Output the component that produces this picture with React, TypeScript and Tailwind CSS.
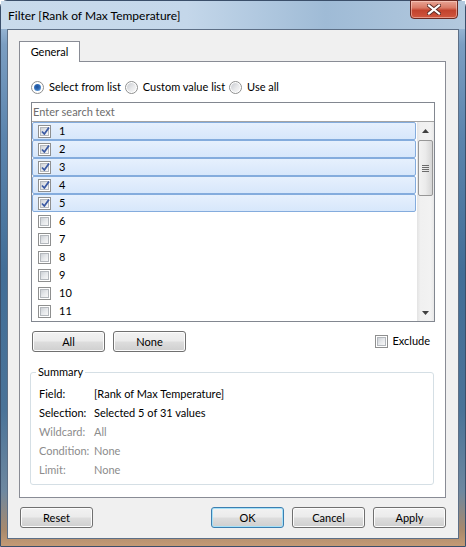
import React from "react";

const FONT = "font-['Lato','Noto_Sans',sans-serif]";

function Checkbox({ checked }: { checked: boolean }) {
  return (
    <span className="relative flex h-[13px] w-[13px] shrink-0 items-center justify-center border border-[#8e8f8f] bg-white">
      <span className="h-[9px] w-[9px] border border-[#b4b8bd] bg-[linear-gradient(135deg,#cdd1d6_0%,#e6e8eb_50%,#f7f7f7_100%)]" />
      {checked && (
        <svg className="absolute left-[1px] top-[0px]" width="11" height="11" viewBox="0 0 11 11">
          <path d="M2 5.5 L4.3 8 L9 1.5" fill="none" stroke="#3b5aa3" strokeWidth="1.8" strokeLinejoin="round" />
        </svg>
      )}
    </span>
  );
}

function Radio({ checked }: { checked: boolean }) {
  return (
    <span className="flex h-[13px] w-[13px] shrink-0 items-center justify-center rounded-full border border-[#8e8f8f] bg-white">
      {checked ? (
        <span className="h-[7px] w-[7px] rounded-full bg-[radial-gradient(circle_at_45%_40%,#1d4f97_0%,#2f6cb8_45%,#8cc0ee_100%)]" />
      ) : (
        <span className="h-[9px] w-[9px] rounded-full bg-[linear-gradient(135deg,#c9ccd1_0%,#e8e9eb_55%,#f8f8f8_100%)]" />
      )}
    </span>
  );
}

function Button({ label, focused = false }: { label: string; focused?: boolean }) {
  return (
    <div
      className={`flex h-[21px] w-[73px] items-center justify-center rounded-[3px] border ${
        focused ? "border-[#3c7fb1] shadow-[inset_0_0_0_1px_#a6e1f8]" : "border-[#707070] shadow-[inset_0_0_0_1px_#fcfcfc]"
      } bg-[linear-gradient(180deg,#f2f2f2_0%,#ebebeb_48%,#dddddd_52%,#cfcfcf_100%)] text-[11px] leading-[14px] text-black`}
    >
      {label}
    </div>
  );
}

function ScrollBar() {
  return (
    <div className="flex h-full w-[17px] flex-col bg-[linear-gradient(90deg,#e3e3e3_0%,#f0f0f0_20%,#f2f2f2_80%,#e8e8e8_100%)]">
      <div className="flex h-[17px] items-center justify-center">
        <svg width="7" height="4" viewBox="0 0 7 4">
          <path d="M3.5 0 L7 4 L0 4 Z" fill="#404040" />
        </svg>
      </div>
      <div className="mx-[1px] mt-[1px] flex h-[56px] items-center justify-center rounded-[2px] border border-[#979797] bg-[linear-gradient(90deg,#f3f3f3_0%,#ebebeb_50%,#d6d6d6_100%)]">
        <div className="flex flex-col gap-[1px]">
          <div className="h-[1px] w-[7px] bg-[#6c6c6c]" />
          <div className="h-[1px] w-[7px] bg-[#6c6c6c]" />
          <div className="h-[1px] w-[7px] bg-[#6c6c6c]" />
          <div className="h-[1px] w-[7px] bg-[#6c6c6c]" />
        </div>
      </div>
      <div className="flex-1" />
      <div className="flex h-[17px] items-center justify-center">
        <svg width="7" height="4" viewBox="0 0 7 4">
          <path d="M0 0 L7 0 L3.5 4 Z" fill="#404040" />
        </svg>
      </div>
    </div>
  );
}

const items = ["1", "2", "3", "4", "5", "6", "7", "8", "9", "10", "11"];

function ListRow({ label, selected }: { label: string; selected: boolean }) {
  return (
    <div
      className={`flex h-[18px] w-[384px] shrink-0 items-center rounded-[2px] border pl-[5px] ${
        selected
          ? "border-[#84acdd] bg-[linear-gradient(180deg,#e6f0fd_0%,#d7e7fb_100%)]"
          : "border-transparent"
      }`}
    >
      <Checkbox checked={selected} />
      <span className="ml-[8px] text-[11px] leading-[14px] text-black">{label}</span>
    </div>
  );
}

function SummaryRow({ label, value, dim }: { label: string; value: string; dim?: boolean }) {
  return (
    <div className={`flex h-[19px] items-center text-[11px] ${dim ? "text-[#8c8c8c]" : "text-black"}`}>
      <span className="w-[55px] shrink-0">{label}</span>
      <span>{value}</span>
    </div>
  );
}

export default function App() {
  return (
    <div className={`${FONT} h-[547px] w-[466px] overflow-hidden`}>
      <div className="flex h-[547px] w-[466px] flex-col rounded-t-[7px] border border-[#3b4f6a] bg-[linear-gradient(180deg,#c2d6ea_0%,#a9c3dd_3%,#7b9ec2_8%,#5b84ad_25%,#426e97_50%,#4a7398_75%,#6e88a0_90%,#a8896c_97%,#c49a74_100%)] px-[6px] pb-[7px]">
        <div className="-mx-[6px] flex h-[28px] shrink-0 items-start justify-between bg-[linear-gradient(90deg,#c9dbec_0%,#c4d7ea_40%,#9fbbd6_70%,#b3c9de_100%)] px-[6px]">
          <span className="mt-[7px] pl-[1px] text-[12px] leading-[16px] text-black">Filter [Rank of Max Temperature]</span>
          <div className="-mt-[1px] mr-[1px] flex h-[19px] w-[48px] items-center justify-center rounded-b-[4px] border border-[#6b2a22] bg-[linear-gradient(180deg,#e8a595_0%,#d97a66_40%,#c2432d_55%,#d0573f_100%)] shadow-[inset_0_0_0_1px_rgba(255,220,210,0.5)]">
            <svg width="14" height="11" viewBox="0 0 14 11">
              <path d="M2 1.5 L12 9.5 M12 1.5 L2 9.5" stroke="#5a2a24" strokeWidth="4" strokeLinecap="square" />
              <path d="M2 1.5 L12 9.5 M12 1.5 L2 9.5" stroke="#ffffff" strokeWidth="2.2" strokeLinecap="square" />
            </svg>
          </div>
        </div>
        <div className="flex flex-1 flex-col border border-[#5d6f86] bg-[#f0f0f0] pl-[11px] pr-[12px] pt-[11px]">
          {/* Tab header */}
          <div className="flex">
            <div className="relative z-10 -mb-[1px] flex h-[21px] w-[61px] items-center justify-center border border-b-0 border-[#898c95] bg-white pt-[1px] text-[11px] text-black">
              General
            </div>
          </div>
          {/* Tab panel */}
          <div className="flex h-[437px] w-[427px] flex-col border border-[#898c95] bg-white pl-[11px] pt-[18px]">
            <div className="flex h-[14px] items-center text-[11px] text-black">
              <Radio checked />
              <span className="ml-[5px]">Select from list</span>
              <span className="ml-[4px]"><Radio checked={false} /></span>
              <span className="ml-[5px]">Custom value list</span>
              <span className="ml-[4px]"><Radio checked={false} /></span>
              <span className="ml-[5px]">Use all</span>
            </div>
            {/* List box */}
            <div className="mt-[8px] flex h-[220px] w-[404px] flex-col border border-[#828790] bg-white">
              <div className="flex h-[19px] shrink-0 items-center border-b border-[#a3a3a3] pl-[1px] text-[11px] text-[#6d6d6d]">
                Enter search text
              </div>
              <div className="flex min-h-0 flex-1">
                <div className="flex flex-1 flex-col overflow-hidden">
                  {items.map((it, i) => (
                    <ListRow key={it} label={it} selected={i < 5} />
                  ))}
                </div>
                <ScrollBar />
              </div>
            </div>
            {/* Buttons row */}
            <div className="mt-[9px] flex w-[404px] items-center">
              <div className="ml-[1px]">
                <Button label="All" />
              </div>
              <div className="ml-[8px]">
                <Button label="None" />
              </div>
              <div className="ml-auto mr-[5px] flex items-center gap-[4px] text-[11px] text-black">
                <Checkbox checked={false} />
                <span>Exclude</span>
              </div>
            </div>
            {/* Summary */}
            <fieldset className="-ml-[1px] mt-[13px] w-[404px] rounded-[3px] border border-[#d5dfe5] pb-[4px] pt-[6px]">
              <legend className="ml-[5px] px-[2px] text-[11px] leading-[14px] text-black">Summary</legend>
              <div className="pl-[8px]">
                <SummaryRow label="Field:" value="[Rank of Max Temperature]" />
                <SummaryRow label="Selection:" value="Selected 5 of 31 values" />
                <SummaryRow label="Wildcard:" value="All" dim />
                <SummaryRow label="Condition:" value="None" dim />
                <SummaryRow label="Limit:" value="None" dim />
              </div>
            </fieldset>
          </div>
          {/* Bottom buttons */}
          <div className="mt-[9px] flex w-[427px] items-center">
            <div className="ml-[1px]">
              <Button label="Reset" />
            </div>
            <div className="ml-auto flex gap-[8px]">
              <Button label="OK" focused />
              <Button label="Cancel" />
              <Button label="Apply" />
            </div>
          </div>
        </div>
      </div>
    </div>
  );
}
